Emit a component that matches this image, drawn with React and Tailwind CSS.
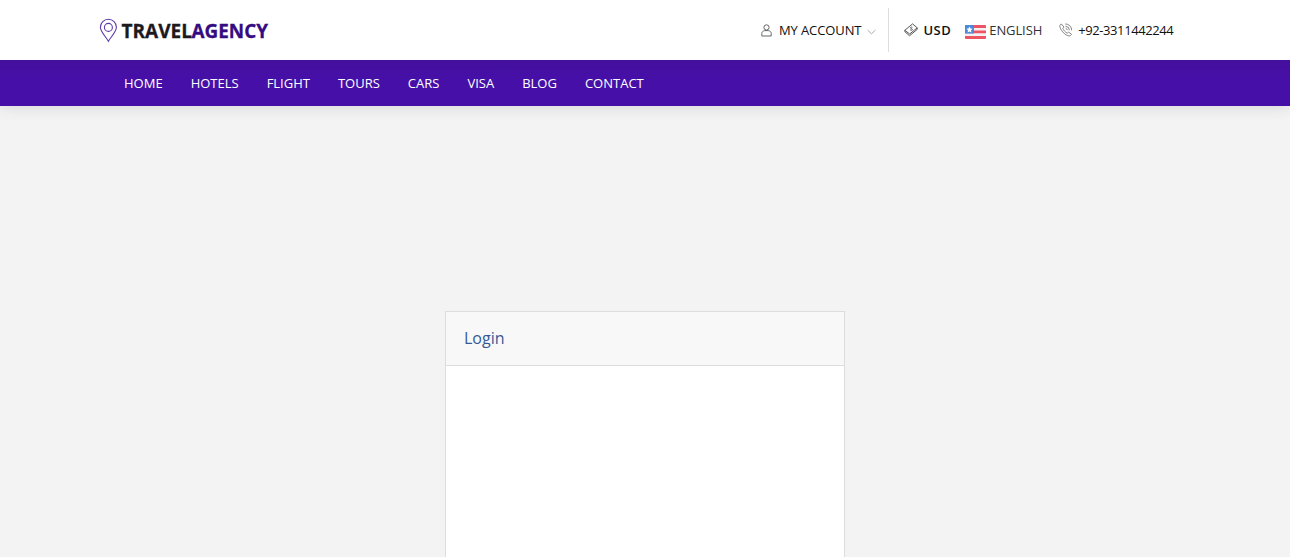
const navItems = ['HOME', 'HOTELS', 'FLIGHT', 'TOURS', 'CARS', 'VISA', 'BLOG', 'CONTACT'];

function Logo() {
  return (
    <svg className="block" width="176" height="30" viewBox="0 -2 176 30" role="img" aria-label="Travel Agency">
      <g fill="none" stroke="#5a3aa8" strokeWidth="1.1">
        <path d="M9.400 24.300C7.500 20.400 1.400 15.100 1.400 10.300a8 8 0 0 1 16 0c0 4.800-6.100 10.100-8 14z" />
        <circle cx="9.400" cy="10.400" r="4" />
      </g>
      <text x="22.500" y="20.700" textLength="70.500" lengthAdjust="spacingAndGlyphs" fill="#1c1a1e" stroke="#1c1a1e" strokeWidth=".3" className="font-['Open_Sans',sans-serif] text-[19.500px] font-bold">TRAVEL</text>
      <text x="92.500" y="20.700" textLength="76.500" lengthAdjust="spacingAndGlyphs" fill="#350b82" stroke="#350b82" strokeWidth=".3" className="font-['Open_Sans',sans-serif] text-[19.500px] font-bold">AGENCY</text>
    </svg>
  );
}

function UserIcon() {
  return (
    <svg width="11" height="13" viewBox="0 0 11 13" fill="none" stroke="#666" strokeWidth="1">
      <circle cx="5.500" cy="3.400" r="2.600" />
      <path d="M.8 12V9.500c0-1.700 1.200-2.500 2.900-2.900h3.600c1.700.4 2.900 1.200 2.900 2.900V12z" />
    </svg>
  );
}

function MoneyIcon() {
  return (
    <svg width="14" height="14" viewBox="0 0 14 14" fill="none" stroke="#444" strokeWidth=".9">
      <path d="M.8 7.300 8.500.9l4.700 3.900-7.500 6.200z" />
      <path d="M.8 7.300v1.300l4.700 4.200 7.700-6.400V4.800" />
      <path d="M8.400 4.300c-1.200-.6-2.300.2-1.700 1 .5.700 1.600.3 1.700 1 .1.900-1.300 1.300-2.200.5" />
    </svg>
  );
}

function FlagIcon() {
  return (
    <svg width="21" height="14" viewBox="0 0 21 14">
      <rect width="21" height="14" rx="1" fill="#f4f1f4" />
      <path d="M1 0H20q1 0 1 1v2H0V1q0-1 1-1zM0 5.500h21v2.800H0zM0 11h21v2q0 1-1 1H1q-1 0-1-1z" fill="#ed5565" />
      <path d="M1 0h8v8.500H0V1q0-1 1-1z" fill="#4a89dc" />
      <path d="m4.500 1.500 1 1.900 2.100.3L6 5.200l.4 2.200-1.900-1-1.900 1L3 5.200 1.400 3.700l2.100-.3z" fill="#fff" />
    </svg>
  );
}

function PhoneIcon() {
  return (
    <svg width="14" height="14" viewBox="0 0 14 14" fill="none" stroke="#777" strokeWidth=".9">
      <path d="M2.300.9.900 2.300c-.8 3.600 5.300 10.600 9.300 10.600.9 0 1.700-.7 2.400-1.500L9.700 9.100 8.300 10.200C6.500 9.500 4.300 7 3.800 5.300l1.200-1.200z" />
      <path d="M6.300 1a6 6 0 0 1 6.300 6.300M6.500 3.300a4 4 0 0 1 3.900 3.900M6.700 5.500q1.400.1 1.600 1.600" />
    </svg>
  );
}

export default function App() {
  return (
    <div className="flex h-[557px] flex-col overflow-hidden bg-[#f3f3f3] font-['Open_Sans',sans-serif] text-[13px] text-[#111]">
      <header className="flex h-[60px] shrink-0 items-center justify-between bg-white pr-[117px] pl-[99px]">
        <Logo />
        <div className="flex h-11 items-center">
          <button className="flex h-11 items-center border-r border-[#ddd] pr-[12px]">
            <UserIcon />
            <span className="ml-[7px] pt-px tracking-[-0.1px]">MY ACCOUNT</span>
            <svg className="mt-[3px] ml-[6px]" width="9" height="6" viewBox="0 0 9 6" fill="none" stroke="#aaa" strokeWidth="1">
              <path d="M.5 1 4.500 4.800 8.500 1" />
            </svg>
          </button>
          <button className="ml-[15px] flex items-center">
            <MoneyIcon />
            <span className="ml-[5px] pt-px font-semibold tracking-[0.500px]">USD</span>
          </button>
          <button className="ml-[14px] flex items-center">
            <span className="mt-1"><FlagIcon /></span>
            <span className="ml-[3px] pt-px tracking-[-0.100px] text-[#333]">ENGLISH</span>
          </button>
          <a className="ml-[17px] flex items-center">
            <PhoneIcon />
            <span className="-mr-[0.400px] ml-[5px] pt-px tracking-[-0.400px]">+92-3311442244</span>
          </a>
        </div>
      </header>
      <nav className="z-10 flex h-[46px] shrink-0 items-center gap-7 bg-linear-to-b from-[#430f9b] to-[#4610a8] to-40% pt-px pl-[124px] text-white shadow-[0_2px_15px_rgba(0,0,0,0.1)] [clip-path:inset(0_0_-30px_0)]">
        {navItems.map((item) => (
          <a key={item}>{item}</a>
        ))}
      </nav>
      <main className="flex flex-1 justify-center pt-[205px]">
        <section className="w-[400px] border border-b-0 border-[#ddd] bg-white">
          <h1 className="flex h-[54px] items-center border-b border-[#ddd] bg-[#f8f8f8] pb-0.5 pl-[18px] text-base text-[#365899]">Login</h1>
        </section>
      </main>
    </div>
  );
}
